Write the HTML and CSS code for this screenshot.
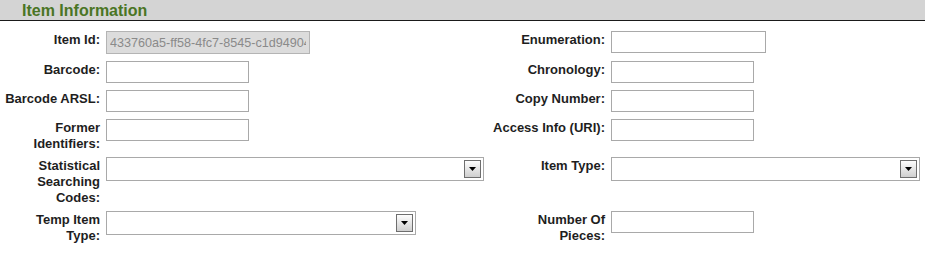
FILE: index.html
```html
<!DOCTYPE html>
<html lang="en">
<head>
    <meta charset="UTF-8">
    <title>Item Information</title>
    <link rel="stylesheet" href="styles.css">
</head>
<body>
    <div class="section-head">
        <h3>Item Information</h3>
    </div>

    <div class="item-form">
        <label class="lbl">Item Id:</label>
        <div class="field"><input class="txt txt-id" type="text" value="433760a5-ff58-4fc7-8545-c1d949045bde" disabled></div>
        <label class="lbl">Enumeration:</label>
        <div class="field"><input class="txt txt-wide" type="text"></div>

        <label class="lbl">Barcode:</label>
        <div class="field"><input class="txt" type="text"></div>
        <label class="lbl">Chronology:</label>
        <div class="field"><input class="txt" type="text"></div>

        <label class="lbl">Barcode ARSL:</label>
        <div class="field"><input class="txt" type="text"></div>
        <label class="lbl">Copy Number:</label>
        <div class="field"><input class="txt" type="text"></div>

        <label class="lbl">Former Identifiers:</label>
        <div class="field"><input class="txt" type="text"></div>
        <label class="lbl">Access Info (URI):</label>
        <div class="field"><input class="txt" type="text"></div>

        <label class="lbl">Statistical Searching Codes:</label>
        <div class="field">
            <div class="dropdown dd-stat">
                <span class="dd-btn"><svg width="7" height="4" viewBox="0 0 7 4"><path d="M0 0h7L3.5 4z" fill="#000"/></svg></span>
            </div>
        </div>
        <label class="lbl">Item Type:</label>
        <div class="field">
            <div class="dropdown dd-type">
                <span class="dd-btn"><svg width="7" height="4" viewBox="0 0 7 4"><path d="M0 0h7L3.5 4z" fill="#000"/></svg></span>
            </div>
        </div>

        <label class="lbl">Temp Item Type:</label>
        <div class="field">
            <div class="dropdown dd-temp">
                <span class="dd-btn"><svg width="7" height="4" viewBox="0 0 7 4"><path d="M0 0h7L3.5 4z" fill="#000"/></svg></span>
            </div>
        </div>
        <label class="lbl">Number Of Pieces:</label>
        <div class="field"><input class="txt" type="text"></div>
    </div>
</body>
</html>
```

FILE: styles.css
```css
body {
    margin: 0;
    font-family: 'Liberation Sans', Arial, sans-serif;
    background: #fff;
    color: #222;
}
.section-head {
    height: 20px;
    background: #d4d4d4;
    border-bottom: 1px solid #1a1a1a;
}
.section-head h3 {
    margin: 0;
    padding-left: 22px;
    font-size: 16px;
    line-height: 21px;
    font-weight: bold;
    color: #4a7524;
}
.item-form {
    display: grid;
    grid-template-columns: 100px 392px 113px 1fr;
    row-gap: 6px;
    padding-top: 10px;
}
.lbl {
    font-size: 13px;
    font-weight: bold;
    line-height: 16px;
    text-align: right;
    color: #1e1e1e;
    padding-top: 1px;
    margin-bottom: -1px;
}
.field {
    display: flex;
    align-items: flex-start;
    padding-left: 6px;
    padding-bottom: 1px;
}
.txt {
    box-sizing: border-box;
    width: 143px;
    height: 22px;
    margin: 0;
    padding: 0 4px;
    border: 1px solid #a9a9a9;
    background: #fff;
    font-family: 'Liberation Sans', Arial, sans-serif;
    font-size: 12.6px;
    outline: none;
}
.txt-wide {
    width: 155px;
}
.txt-id {
    width: 204px;
    height: 23px;
    background: #dcdcdc;
    color: #8a8a8a;
    border-color: #b4b4b4;
    padding: 0 3px;
}
.dropdown {
    box-sizing: border-box;
    height: 24px;
    border: 1px solid #a9a9a9;
    background: #fff;
    display: flex;
    justify-content: flex-end;
    align-items: center;
    padding-right: 2px;
}
.dd-stat {
    width: 378px;
}
.dd-temp {
    width: 310px;
}
.dd-type {
    width: 309px;
}
.dd-btn {
    box-sizing: border-box;
    width: 17px;
    height: 18px;
    border: 1px solid #6e6e6e;
    background: linear-gradient(#fdfdfd, #cfcfcf);
    display: flex;
    justify-content: center;
    align-items: center;
}
```
